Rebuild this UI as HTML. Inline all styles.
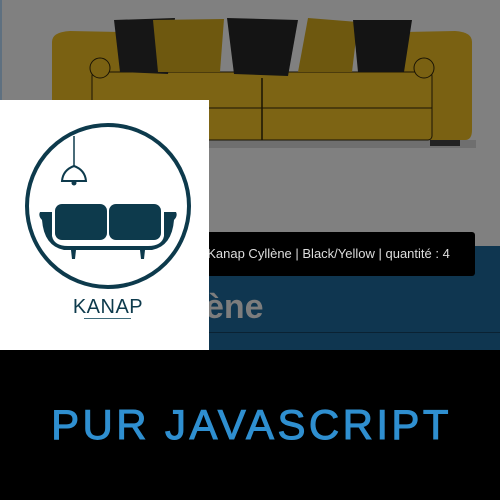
<!DOCTYPE html>
<html><head><meta charset="utf-8"><style>
html,body{margin:0;padding:0;width:500px;height:500px;overflow:hidden;background:#000}
.top{position:absolute;left:0;top:0;width:500px;height:350px;background:#808080}
.blue{position:absolute;left:0;top:246px;width:500px;height:104px;background:#0f3650}
.line{position:absolute;left:200px;top:332px;width:300px;height:1px;background:#0a2233}
.ene{position:absolute;left:205px;top:288px;font:bold 34px "Liberation Sans",sans-serif;color:#7d7d7d}
.toast{position:absolute;left:200px;top:232px;width:275px;height:44px;background:#000;border-radius:3px;color:#ddd;font:13px "Liberation Sans",sans-serif;line-height:44px;white-space:nowrap;overflow:hidden}
.logo{position:absolute;left:0;top:100px;width:209px;height:250px;background:#fff}
.pur{position:absolute;left:0;top:350px;width:500px;height:150px;text-align:center;font:42px "Liberation Sans",sans-serif;color:#2f8fd0;letter-spacing:3.4px;line-height:150px;padding-left:3px;box-sizing:border-box;-webkit-text-stroke:1px #2f8fd0}
</style></head><body>
<div class="top"></div>
<div style="position:absolute;left:0;top:0;width:2px;height:100px;background:#5e7080"></div>
<svg style="position:absolute;left:0;top:0" width="500" height="160">
 <rect x="96" y="140" width="380" height="8" fill="#6f6f6f"/>
 <path d="M52 42 Q52 32 70 31 L120 32 Q140 36 150 50 L150 140 L60 140 Q52 140 52 130Z" fill="#7a6112"/>
 <path d="M472 42 Q472 32 455 31 L405 32 Q385 36 375 50 L375 140 L465 140 Q472 140 472 130Z" fill="#7a6112"/>
 <rect x="92" y="72" width="340" height="68" rx="4" fill="#7d6414" stroke="#1a1405" stroke-width="1"/>
 <line x1="92" y1="108" x2="432" y2="108" stroke="#1a1405" stroke-width="1"/>
 <line x1="262" y1="78" x2="262" y2="140" stroke="#1a1405" stroke-width="1.5"/>
 <rect x="430" y="140" width="30" height="6" fill="#222"/>
 <path d="M114 20 L175 18 L168 74 L120 72Z" fill="#161616"/>
 <path d="M153 20 L224 19 L220 72 L158 72Z" fill="#6e580f"/>
 <path d="M227 18 L298 20 L288 76 L234 74Z" fill="#141414"/>
 <path d="M308 18 L358 22 L352 72 L298 72Z" fill="#6e580f"/>
 <path d="M353 20 L412 20 L404 72 L358 72Z" fill="#141414"/>
 <ellipse cx="100" cy="68" rx="10" ry="10" fill="#7a6112" stroke="#1a1405"/>
 <ellipse cx="424" cy="68" rx="10" ry="10" fill="#7a6112" stroke="#1a1405"/>
</svg>
<div class="blue"></div>
<div class="line"></div>
<div class="ene">ène</div>
<div class="toast">&nbsp;&nbsp;Kanap Cyllène | Black/Yellow | quantité : 4</div>
<div class="logo">
<svg width="209" height="250" viewBox="0 100 209 250">
 <circle cx="108" cy="206" r="81" fill="none" stroke="#0d3a4c" stroke-width="4"/>
 <line x1="74" y1="136" x2="74" y2="166" stroke="#0d3a4c" stroke-width="1.5"/>
 <path d="M62 181 Q63 170 74 166 Q85 170 86 181Z" fill="none" stroke="#0d3a4c" stroke-width="2"/>
 <circle cx="74" cy="183" r="2.5" fill="#0d3a4c"/>
 <path d="M40 212 L52 212 L52 236 Q54 246 68 246 L148 246 Q162 246 164 236 L164 212 L176 212 Q178 216 174 220 Q172 246 152 250 L64 250 Q44 246 42 220 Q38 216 40 212Z" fill="#0d3a4c"/>
 <rect x="55" y="204" width="52" height="36" rx="7" fill="#0d3a4c"/>
 <rect x="109" y="204" width="52" height="36" rx="7" fill="#0d3a4c"/>
 <path d="M71 250 L76 250 L75 259 L72 259Z M140 250 L145 250 L144 259 L141 259Z" fill="#0d3a4c"/>
 <text x="108" y="313" text-anchor="middle" font-family="Liberation Sans,sans-serif" font-size="20" fill="#0d3a4c" letter-spacing="0.5">KANAP</text>
 <line x1="84" y1="318.5" x2="131" y2="318.5" stroke="#3d6a7a" stroke-width="1"/>
</svg>
</div>
<div class="pur">PUR JAVASCRIPT</div>
</body></html>
